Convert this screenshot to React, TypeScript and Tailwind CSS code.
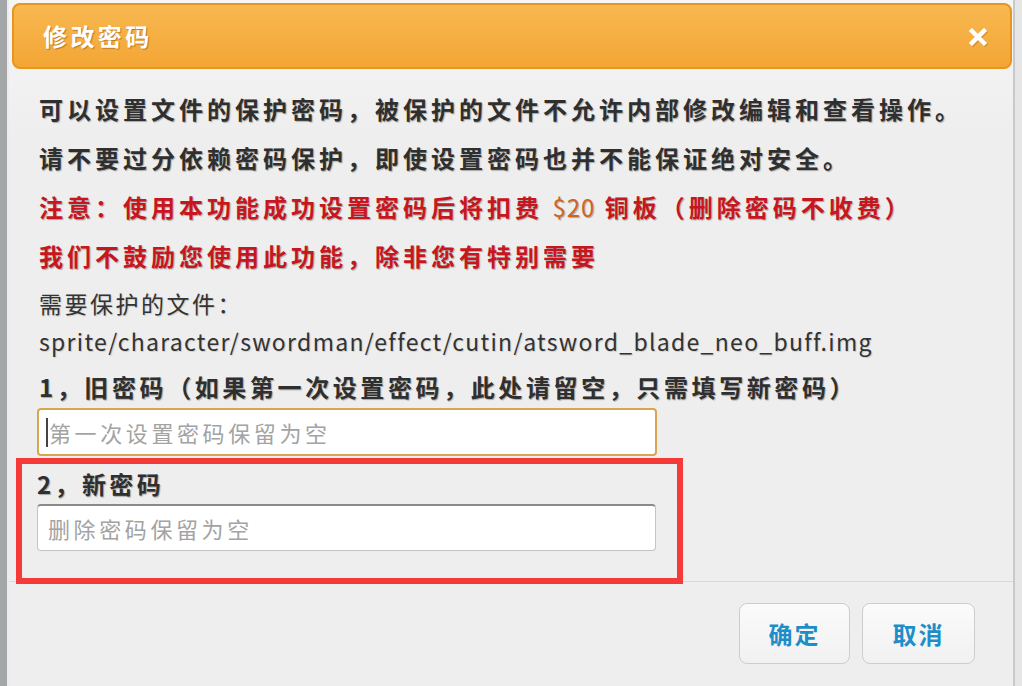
import { useState } from 'react';

const cjk = "font-['Noto_Sans_CJK_SC','Noto_Sans',sans-serif]";

export default function App() {
  const [oldPwd, setOldPwd] = useState('');
  const [newPwd, setNewPwd] = useState('');

  return (
    <div className={`flex h-[686px] w-[1022px] overflow-hidden bg-[#e9e9e9] ${cjk}`}>
      {/* page behind the dialog */}
      <div className="w-[7px] shrink-0 bg-[#a3a7a7]" />

      <div className="flex w-[1008px] shrink-0 flex-col border-l-2 border-r-2 border-l-[#ececec] border-r-[#c9c9c9] bg-gradient-to-b from-[#f6f6f6] to-[#eeeeee] to-[20%]">
        {/* HEADER */}
        <div className="mt-[3px] ml-[3px] mr-[1px] flex h-[66px] items-center justify-between rounded-[8px] border-2 border-[#e7951d] bg-gradient-to-b from-[#f8b850] to-[#f3a634] pl-[29px] pr-[20px]">
          <h2 className="text-[24px] font-bold tracking-[3.4px] text-white [text-shadow:1px_1px_1px_rgba(120,60,0,0.45)]">修改密码</h2>
          <button className="mt-[2px] flex h-[24px] w-[24px] items-center justify-center">
            <svg width="18" height="18" viewBox="0 0 18 18" className="drop-shadow-[1px_1px_0_rgba(150,80,0,0.35)]">
              <path d="M3 3 L15 15 M15 3 L3 15" stroke="#ffffff" strokeWidth="4.5" strokeLinecap="square" />
            </svg>
          </button>
        </div>

        {/* BODY */}
        <div className="flex-1 pl-[30px] pt-[15px]">
          <div className="text-[24px] font-bold leading-[49px] tracking-[4px] [text-shadow:1px_1px_1px_rgba(0,0,0,0.3)]">
            <p className="text-[#2f2f2f]">可以设置文件的保护密码，被保护的文件不允许内部修改编辑和查看操作。</p>
            <p className="text-[#2f2f2f]">请不要过分依赖密码保护，即使设置密码也并不能保证绝对安全。</p>
            <p className="text-[#c8161e]">注意：使用本功能成功设置密码后将扣费 <span className="font-normal tracking-[1px] text-[#d0641e]">$20</span> 铜板（删除密码不收费）</p>
            <p className="text-[#c8161e]">我们不鼓励您使用此功能，除非您有特别需要</p>
          </div>

          <p className="mt-[4px] text-[23px] leading-[38px] tracking-[2.5px] text-[#333] [text-shadow:1px_1px_1px_rgba(0,0,0,0.15)]">需要保护的文件：</p>
          <p className="text-[23px] leading-[38px] tracking-[1.3px] text-[#333] [text-shadow:1px_1px_1px_rgba(0,0,0,0.15)]">sprite/character/swordman/effect/cutin/atsword_blade_neo_buff.img</p>

          <p className="mt-[7px] text-[24px] font-bold leading-[40px] tracking-[3.6px] text-[#2f2f2f] [text-shadow:1px_1px_1px_rgba(0,0,0,0.3)]">1，旧密码（如果第一次设置密码，此处请留空，只需填写新密码）</p>
          <div className="relative -ml-[2px] mt-[1px] h-[48px] w-[620px]">
            <input
              value={oldPwd}
              onChange={e => setOldPwd(e.target.value)}
              placeholder="第一次设置密码保留为空"
              className="h-full w-full rounded-[4px] border-2 border-[#d8a650] bg-white pl-[10px] text-[22px] tracking-[3.6px] text-[#333] outline-none placeholder:text-[#a3a3a3]"
            />
            <span className="absolute left-[9px] top-[10px] h-[29px] w-[2px] bg-[#444]" />
          </div>

          {/* highlighted section */}
          <div className="relative z-10 -ml-[23px] mt-[2px] h-[126px] w-[667px] border-[6px] border-[#f53a3a] pl-[15px]">
            <p className="text-[24px] font-bold leading-[40px] tracking-[3.4px] text-[#2f2f2f] [text-shadow:1px_1px_1px_rgba(0,0,0,0.3)]">2，新密码</p>
            <input
              value={newPwd}
              onChange={e => setNewPwd(e.target.value)}
              placeholder="删除密码保留为空"
              className="h-[47px] w-[619px] rounded-[4px] border border-t-2 border-[#c4c4c4] border-t-[#8a8a8a] bg-white pl-[10px] text-[22px] tracking-[3.6px] text-[#333] outline-none placeholder:text-[#a3a3a3]"
            />
          </div>
        </div>

        {/* FOOTER */}
        <div className="-mt-[3px] border-t border-[#d8d8d8]">
          <div className="flex justify-end gap-[12px] pr-[38px] pt-[21px] pb-[22px]">
            <button className="h-[61px] w-[111px] rounded-[8px] border border-[#cdcdcd] bg-gradient-to-b from-[#fbfbfb] to-[#f1f1f1] text-[24px] font-bold tracking-[2px] text-[#1f8ec8]">确定</button>
            <button className="h-[61px] w-[113px] rounded-[8px] border border-[#cdcdcd] bg-gradient-to-b from-[#fbfbfb] to-[#f1f1f1] text-[24px] font-bold tracking-[2px] text-[#1f8ec8]">取消</button>
          </div>
        </div>
      </div>

      <div className="flex-1 bg-[#e6e6e6]" />
    </div>
  );
}
